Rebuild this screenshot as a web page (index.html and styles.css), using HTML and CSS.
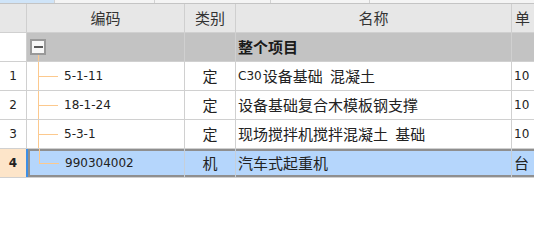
FILE: index.html
```html
<!DOCTYPE html>
<html>
<head>
<meta charset="utf-8">
<link rel="stylesheet" href="styles.css">
</head>
<body>
<div class="grid">
  <div class="strip">
    <div class="s s-active"></div>
    <div class="s s-a"></div>
    <div class="s s-b"></div>
    <div class="s s-c"></div>
    <div class="s s-rest"></div>
  </div>
  <div class="row head">
    <div class="c c0"></div>
    <div class="c c1 center">编码</div>
    <div class="c c2 center">类别</div>
    <div class="c c3 center">名称</div>
    <div class="c c4"><span class="unit">单</span></div>
  </div>
  <div class="row group">
    <div class="c c0 white"></div>
    <div class="c c1 gtree"><span class="toggle"><span class="minus"></span></span></div>
    <div class="c c2"></div>
    <div class="c c3 bold">整个项目</div>
    <div class="c c4"></div>
  </div>
  <div class="row">
    <div class="c c0 center white"><span class="num">1</span></div>
    <div class="c c1"><span class="tree"></span><span class="num code">5-1-11</span></div>
    <div class="c c2 center">定</div>
    <div class="c c3 name"><span class="num lat">C30</span>设备基础 混凝土</div>
    <div class="c c4"><span class="num">10</span></div>
  </div>
  <div class="row">
    <div class="c c0 center white"><span class="num">2</span></div>
    <div class="c c1"><span class="tree"></span><span class="num code">18-1-24</span></div>
    <div class="c c2 center">定</div>
    <div class="c c3 name">设备基础复合木模板钢支撑</div>
    <div class="c c4"><span class="num">10</span></div>
  </div>
  <div class="row">
    <div class="c c0 center white"><span class="num">3</span></div>
    <div class="c c1"><span class="tree"></span><span class="num code">5-3-1</span></div>
    <div class="c c2 center">定</div>
    <div class="c c3 name">现场搅拌机搅拌混凝土 基础</div>
    <div class="c c4"><span class="num">10</span></div>
  </div>
  <div class="row current">
    <div class="c c0 center peach"><span class="num bnum">4</span></div>
    <div class="sel">
      <div class="c c1s"><span class="tree last"></span><span class="num code">990304002</span></div>
      <div class="c c2 center">机</div>
      <div class="c c3 name">汽车式起重机</div>
      <div class="c c4">台</div>
    </div>
  </div>
</div>
</body>
</html>
```
FILE: styles.css
```css
html, body {
  margin: 0;
  padding: 0;
  background: #ffffff;
}
.grid {
  width: 534px;
  overflow: hidden;
  font-family: "Noto Sans CJK SC", sans-serif;
  font-size: 15px;
  color: #222;
}
.strip {
  display: flex;
  height: 4px;
  box-sizing: border-box;
  border-bottom: 1px solid #c4c4c4;
  background: #f4f4f4;
}
.s {
  box-sizing: border-box;
  border-right: 1px solid #d2d2d2;
}
.s-active { width: 55px; background: #cfe4f8; }
.s-a { width: 100px; }
.s-b { width: 116px; }
.s-c { width: 99px; }
.s-rest { flex: 1; border-right: none; }
.row {
  display: flex;
  height: 29px;
  box-sizing: border-box;
  border-bottom: 1px solid #d0d0d0;
}
.c {
  box-sizing: border-box;
  border-right: 1px solid #d0d0d0;
  display: flex;
  align-items: center;
  white-space: pre;
  overflow: hidden;
  flex: none;
  padding-left: 2px;
  line-height: 28px;
}
.center { justify-content: center; padding-left: 0; }
.c0 { width: 27px; }
.c1 { width: 158px; padding-left: 0; }
.c1s { width: 157px; padding-left: 0; }
.c2 { width: 51px; }
.c3 { width: 276px; }
.c4 { flex: 1; border-right: none; }
.name { word-spacing: 4px; }
.head { background: #e7e7e7; color: #333; }
.head .c { border-right-color: #cfcfcf; }
.unit { padding-left: 1px; }
.group { background: #c3c3c3; }
.group .c { border-right-color: #d0d0d0; }
.white { background: #ffffff; }
.bold { font-weight: bold; color: #1a1a1a; }
.num {
  font-family: "DejaVu Sans", sans-serif;
  font-size: 12px;
}
.lat { padding-right: 1px; }
.code { margin-left: 6px; }
.tree {
  flex: none;
  width: 20px;
  margin-left: 11px;
  align-self: stretch;
  margin-bottom: -1px;
  background:
    linear-gradient(#fcc98e, #fcc98e) left top / 1px 100% no-repeat,
    linear-gradient(#fcc98e, #fcc98e) left 14px / 100% 1px no-repeat;
}
.tree.last {
  background:
    linear-gradient(#fcc98e, #fcc98e) left top / 1px 15px no-repeat,
    linear-gradient(#fcc98e, #fcc98e) left 14px / 100% 1px no-repeat;
}
.gtree {
  align-items: flex-start;
  background: linear-gradient(#fcc98e, #fcc98e) 11px bottom / 1px 6px no-repeat;
}
.toggle {
  margin-left: 3px;
  margin-top: 6px;
  width: 16px;
  height: 16px;
  box-sizing: border-box;
  border: 2px solid #999999;
  background: #f7f7f7;
  display: flex;
  align-items: center;
  justify-content: center;
}
.minus {
  width: 9px;
  height: 2px;
  background: #5a5a5a;
}
.current {
  height: 28px;
  border-bottom: none;
  margin-bottom: 1px;
  box-shadow: 0 1px 0 #d0d0d0;
}
.peach { background: #fde5c9; width: 26px; border-right: none; }
.bnum { font-weight: bold; }
.sel {
  flex: 1;
  display: flex;
  border-left: 2px solid #3d8fe6;
  background: #b5d6fc;
  box-shadow: inset 2px 0 0 #8f8f8f, inset 0 2px 0 #8f8f8f, inset 0 -2px 0 #8f8f8f;
}
.sel .c { border-right-color: #c6cfd9; }
```
